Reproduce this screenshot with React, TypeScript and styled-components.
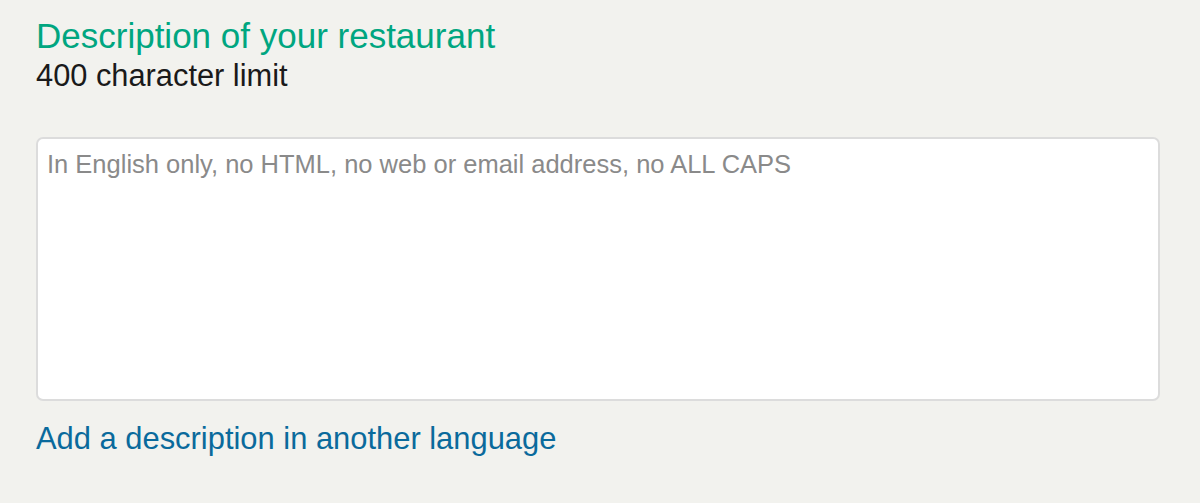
import styled, { createGlobalStyle } from 'styled-components';

const GlobalStyle = createGlobalStyle`
  html, body {
    margin: 0;
    padding: 0;
    background: #f2f2ee;
  }
  body {
    font-family: "Liberation Sans", Arial, sans-serif;
  }
`;

const Section = styled.section`
  display: flex;
  flex-direction: column;
  align-items: flex-start;
  padding: 16px 40px 0 36px;
`;

const Title = styled.h2`
  margin: 0;
  font-size: 35px;
  font-weight: 400;
  line-height: 40px;
  color: #00a680;
`;

const Hint = styled.div`
  font-size: 30.8px;
  line-height: 40px;
  color: #1a1a1a;
`;

const DescriptionBox = styled.textarea`
  box-sizing: border-box;
  margin-top: 41px;
  width: 1124px;
  height: 264px;
  padding: 10px 9px;
  border: 2px solid #dcdcdc;
  border-radius: 7px;
  background: #fff;
  resize: none;
  font-family: "Liberation Sans", Arial, sans-serif;
  font-size: 25.5px;
  line-height: 30px;
  color: #333;
  outline: none;

  &::placeholder {
    color: #8a8a8a;
  }
`;

const LanguageLink = styled.a`
  display: inline-block;
  margin-top: 20px;
  font-size: 30.9px;
  line-height: 36px;
  color: #0a6a9c;
  text-decoration: none;
  cursor: pointer;
`;

export default function App() {
  return (
    <>
      <GlobalStyle />
      <Section>
        <Title>Description of your restaurant</Title>
        <Hint>400 character limit</Hint>
        <DescriptionBox placeholder="In English only, no HTML, no web or email address, no ALL CAPS" />
        <LanguageLink>Add a description in another language</LanguageLink>
      </Section>
    </>
  );
}
